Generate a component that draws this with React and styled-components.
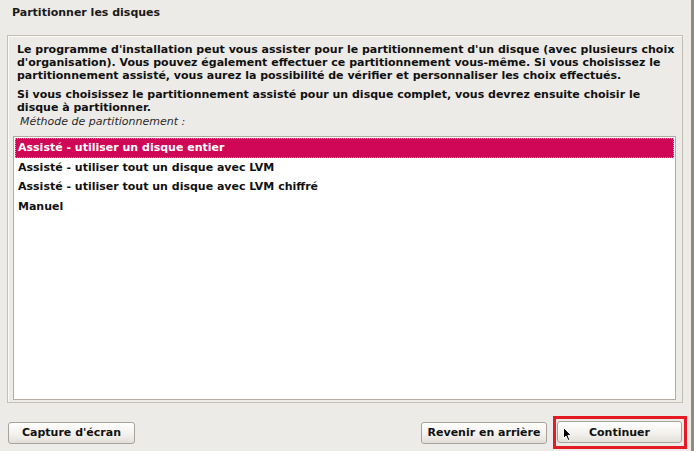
import React from "react";
import styled, { createGlobalStyle } from "styled-components";

const Global = createGlobalStyle`
  html, body { margin: 0; padding: 0; background: #edebe7; }
  body { font-family: "DejaVu Sans", "Liberation Sans", sans-serif; }
`;

const Screen = styled.div`
  width: 694px;
  height: 451px;
  box-sizing: border-box;
  background: #edebe7;
  border-right: 3px solid #8e8b86;
  display: flex;
  flex-direction: column;
  overflow: hidden;
`;

const Title = styled.h1`
  margin: 0;
  padding: 6px 0 0 12px;
  height: 35px;
  box-sizing: border-box;
  font-size: 11px;
  font-weight: bold;
  color: #1a1a1a;
  line-height: 13px;
`;

const Frame = styled.div`
  margin-left: 7px;
  width: 676px;
  height: 368px;
  flex-shrink: 0;
  box-sizing: border-box;
  border: 1px solid #c6bfb3;
  box-shadow: inset 1px 1px 0 #fbfaf8;
  padding: 7px 6px 2px 5px;
  display: flex;
  flex-direction: column;
`;

const Para = styled.p`
  margin: 0 0 6px 4px;
  font-size: 11px;
  font-weight: bold;
  line-height: 13px;
  color: #111;
`;

const Label = styled.div`
  margin: -5px 0 8px 7px;
  font-size: 11px;
  font-style: italic;
  color: #2a2a2a;
  line-height: 13px;
`;

const List = styled.ul`
  list-style: none;
  margin: 0;
  padding: 1px;
  flex: 1;
  background: #fff;
  border: 1px solid #b3aca1;
`;

const Item = styled.li`
  height: 19.6px;
  box-sizing: border-box;
  padding-left: 3px;
  display: flex;
  align-items: center;
  font-size: 11px;
  font-weight: bold;
  color: ${(p) => (p.$selected ? "#fff" : "#111")};
  background: ${(p) => (p.$selected ? "#d00657" : "transparent")};
  outline: ${(p) => (p.$selected ? "1px dotted #f59ab8" : "none")};
  outline-offset: -1px;
`;

const Bar = styled.div`
  display: flex;
  align-items: center;
  padding: 13px 0 0 8px;
`;

const Button = styled.button`
  width: ${(p) => p.$w}px;
  height: 22px;
  box-sizing: border-box;
  border: 1px solid #a8a299;
  border-radius: 3px;
  background: linear-gradient(#ffffff, #f2f0ec 60%, #e2dfd9);
  font-family: "DejaVu Sans", "Liberation Sans", sans-serif;
  font-size: 11px;
  font-weight: bold;
  color: #111;
  padding: 0;
`;

const Spacer = styled.div`
  flex: 1;
`;

const Highlight = styled.div`
  position: relative;
  margin: 0 4px 0 6px;
  padding: 2px 2px 3px 1px;
  border: 3px solid #e61a24;
  display: flex;
`;

const Cursor = styled.svg`
  position: absolute;
  left: 7px;
  top: 8px;
`;

export default function App() {
  const items = [
    "Assisté - utiliser un disque entier",
    "Assisté - utiliser tout un disque avec LVM",
    "Assisté - utiliser tout un disque avec LVM chiffré",
    "Manuel",
  ];
  return (
    <>
      <Global />
      <Screen>
        <Title>Partitionner les disques</Title>
        <Frame>
          <Para>
            Le programme d'installation peut vous assister pour le partitionnement d'un disque (avec plusieurs choix
            d'organisation). Vous pouvez également effectuer ce partitionnement vous-même. Si vous choisissez le
            partitionnement assisté, vous aurez la possibilité de vérifier et personnaliser les choix effectués.
          </Para>
          <Para>
            Si vous choisissez le partitionnement assisté pour un disque complet, vous devrez ensuite choisir le
            disque à partitionner.
          </Para>
          <Label>Méthode de partitionnement :</Label>
          <List>
            {items.map((t, i) => (
              <Item key={t} $selected={i === 0}>
                {t}
              </Item>
            ))}
          </List>
        </Frame>
        <Bar>
          <Button $w={127}>Capture d'écran</Button>
          <Spacer />
          <Button $w={126}>Revenir en arrière</Button>
          <Highlight>
            <Button $w={125}>Continuer</Button>
            <Cursor width="10" height="15" viewBox="0 0 10 15">
              <path d="M0.5 0.5 L0.5 11.5 L3 9 L5 13.5 L6.8 12.7 L4.9 8.4 L8.3 8.4 Z" fill="#000" stroke="#fff" strokeWidth="1" />
            </Cursor>
          </Highlight>
        </Bar>
      </Screen>
    </>
  );
}
